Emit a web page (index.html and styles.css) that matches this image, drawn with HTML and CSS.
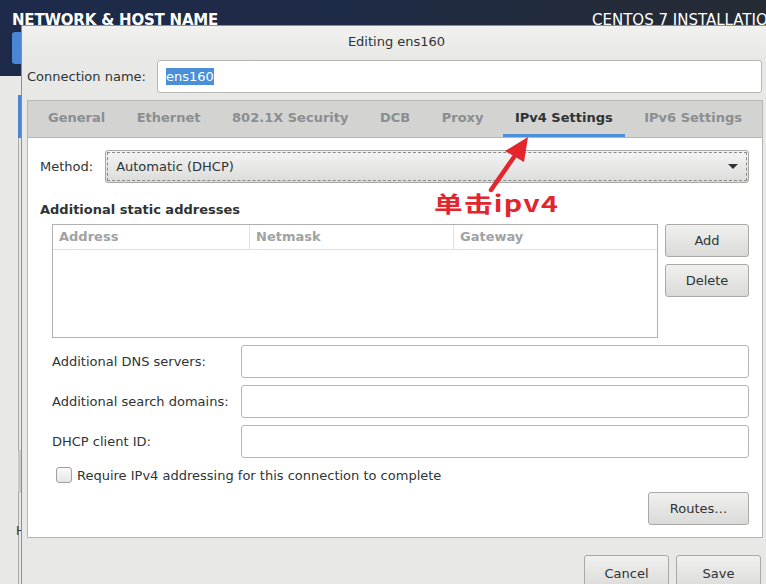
FILE: index.html
```html
<!DOCTYPE html>
<html lang="en">
<head>
  <meta charset="UTF-8">
  <title>Editing ens160</title>
  <link rel="stylesheet" href="styles.css">
</head>
<body>
  <!-- installer screen behind the dialog -->
  <header class="topbar">
    <h1>NETWORK &amp; HOST NAME</h1>
    <span class="product">CENTOS 7 INSTALLATION</span>
  </header>
  <div class="back-btn"></div>
  <div class="back-list">
    <div class="back-sel"></div>
    <div class="back-thumb"></div>
    <div class="back-h">H</div>
  </div>

  <!-- edit connection dialog -->
  <div class="dialog">
    <div class="dialog-title">Editing ens160</div>

    <div class="conn-row">
      <label>Connection name:</label>
      <div class="entry"><span class="selected">ens160</span></div>
    </div>

    <div class="notebook">
      <div class="tabs">
        <div class="tab">General</div>
        <div class="tab">Ethernet</div>
        <div class="tab">802.1X Security</div>
        <div class="tab">DCB</div>
        <div class="tab">Proxy</div>
        <div class="tab active">IPv4 Settings</div>
        <div class="tab">IPv6 Settings</div>
      </div>

      <div class="page">
        <div class="method-row">
          <label>Method:</label>
          <div class="combo">
            <span>Automatic (DHCP)</span>
            <span class="arrow"></span>
          </div>
        </div>

        <div class="section-title">Additional static addresses</div>

        <div class="addresses">
          <div class="table">
            <div class="thead">
              <div class="th">Address</div>
              <div class="th">Netmask</div>
              <div class="th">Gateway</div>
            </div>
          </div>
          <div class="side-buttons">
            <button class="btn">Add</button>
            <button class="btn">Delete</button>
          </div>
        </div>

        <div class="fields">
          <label>Additional DNS servers:</label>
          <div class="entry"></div>
          <label>Additional search domains:</label>
          <div class="entry"></div>
          <label>DHCP client ID:</label>
          <div class="entry"></div>
        </div>

        <div class="check-row">
          <span class="checkbox"></span>
          <span>Require IPv4 addressing for this connection to complete</span>
        </div>

        <div class="routes-row">
          <button class="btn routes">Routes…</button>
        </div>
      </div>
    </div>

    <div class="dialog-actions">
      <button class="btn action">Cancel</button>
      <button class="btn action">Save</button>
    </div>
  </div>

  <!-- red annotation -->
  <svg class="note-arrow" width="80" height="70" viewBox="0 0 80 70">
    <line x1="11" y1="55" x2="34" y2="22" stroke="#e3262d" stroke-width="4.5" stroke-linecap="round"/>
    <polygon points="48,2 25,16 44,27" fill="#e3262d"/>
  </svg>
  <div class="note-text">单击ipv4</div>
</body>
</html>
```

FILE: styles.css
```css
/* base */
body {
  margin: 0;
  width: 766px;
  height: 584px;
  overflow: hidden;
  position: relative;
  background: #e8e8e7;
  font-family: "DejaVu Sans", sans-serif;
  font-size: 13px;
  color: #2e3436;
}

/* installer background */
.topbar {
  height: 76px;
  background: linear-gradient(90deg, #1d2a4a 0%, #1f2b45 50%, #262b33 100%);
  display: flex;
  justify-content: space-between;
  align-items: flex-start;
  padding: 0 0 0 12px;
  color: #fff;
}

.topbar h1 {
  margin: 11px 0 0;
  font-size: 15px;
  font-weight: 600;
  letter-spacing: -0.2px;
}

.product {
  margin: 11px 0 0;
  font-size: 15px;
  white-space: nowrap;
  width: 174px;
  overflow: hidden;
}

.back-btn {
  position: absolute;
  left: 12px;
  top: 32px;
  width: 20px;
  height: 32px;
  background: #4a86d4;
  border-radius: 3px;
}

.back-list {
  position: absolute;
  left: 18px;
  top: 95px;
  width: 1px;
  height: 489px;
  background: #a8a8a8;
}

.back-sel {
  position: absolute;
  left: 0;
  top: 0;
  width: 4px;
  height: 43px;
  background: #4a86d4;
}

.back-thumb {
  position: absolute;
  left: 0;
  top: 355px;
  width: 4px;
  height: 43px;
  background: #c8c8c8;
  border-radius: 2px;
}

.back-h {
  position: absolute;
  left: -2px;
  top: 429px;
  font-size: 12px;
  color: #2e3436;
}

/* dialog */
.dialog {
  position: absolute;
  left: 21px;
  top: 25px;
  width: 749px;
  height: 580px;
  background: #e8e8e7;
  border: 1px solid #8f8f8f;
  border-right: none;
  border-bottom: none;
}

.dialog-title {
  height: 31px;
  line-height: 31px;
  text-align: center;
  background: linear-gradient(#f1f1f0, #e8e8e7);
  color: #2e3436;
}

.conn-row {
  display: flex;
  align-items: center;
  padding: 3px 9px 0 5px;
  gap: 10px;
}

.conn-row label {
  width: 120px;
  white-space: nowrap;
}

.entry {
  flex: 1;
  height: 31px;
  background: #fff;
  border: 1px solid #b6b6b3;
  border-radius: 3px;
  display: flex;
  align-items: center;
  padding-left: 8px;
}

.selected {
  background: #4a90d9;
  color: #fff;
  line-height: 17px;
}

/* notebook */
.notebook {
  margin: 7px 8px 0 5px;
  border: 1px solid #b6b6b3;
  height: 436px;
  background: #fff;
  display: flex;
  flex-direction: column;
}

.tabs {
  height: 36px;
  background: #d3d3d2;
  border-bottom: 1px solid #b6b6b3;
  display: flex;
  padding-left: 8px;
  gap: 7.5px;
}

.tab {
  padding: 0 12px;
  line-height: 34px;
  font-weight: bold;
  color: #8b8e8f;
  white-space: nowrap;
  border-bottom: 3px solid transparent;
}

.tab.active {
  color: #2e3436;
  border-bottom-color: #4a90d9;
}

.page {
  flex: 1;
  padding: 12px 13px 0 12px;
}

.method-row {
  display: flex;
  align-items: center;
  gap: 12px;
}

.combo {
  flex: 1;
  height: 31px;
  border: 1px solid #a7a7a5;
  border-radius: 3px;
  background: linear-gradient(#f4f4f4, #dcdcdb);
  display: flex;
  align-items: center;
  justify-content: space-between;
  padding: 0 10px 0 10px;
  outline: 1px dashed #8a8a8a;
  outline-offset: -3px;
}

.arrow {
  width: 0;
  height: 0;
  border-left: 5px solid transparent;
  border-right: 5px solid transparent;
  border-top: 5px solid #2e3436;
}

.section-title {
  font-weight: bold;
  margin: 19px 0 7px;
}

/* addresses table */
.addresses {
  display: flex;
  gap: 7px;
  padding-left: 12px;
}

.table {
  flex: 1;
  height: 112px;
  border: 1px solid #b0b0ae;
}

.thead {
  display: grid;
  grid-template-columns: 197px 204px 1fr;
  height: 24px;
  border-bottom: 1px solid #e1e1e0;
}

.th {
  font-weight: bold;
  color: #a0a2a3;
  line-height: 23px;
  padding-left: 6px;
  border-right: 1px solid #e1e1e0;
}

.th:last-child {
  border-right: none;
}

.side-buttons {
  width: 84px;
  display: flex;
  flex-direction: column;
  gap: 7px;
}

.btn {
  font-family: inherit;
  font-size: 13px;
  color: #2e3436;
  height: 33px;
  border: 1px solid #a9a9a7;
  border-radius: 3px;
  background: linear-gradient(#f0f0ef, #dadad9);
  padding: 0;
}

/* entries */
.fields {
  display: grid;
  grid-template-columns: 189px 1fr;
  row-gap: 7px;
  align-items: center;
  margin: 7px 0 0 12px;
}

.fields .entry {
  height: 31px;
}

.check-row {
  display: flex;
  align-items: center;
  gap: 5px;
  margin: 9px 0 0 16px;
}

.checkbox {
  width: 14px;
  height: 14px;
  border: 1px solid #a0a0a0;
  border-radius: 3px;
  background: linear-gradient(#fafafa, #e6e6e6);
}

.routes-row {
  display: flex;
  justify-content: flex-end;
  margin-top: 9px;
}

.routes {
  width: 101px;
}

/* dialog buttons */
.dialog-actions {
  display: flex;
  justify-content: flex-end;
  gap: 7px;
  padding: 17px 10px 0 0;
}

.action {
  width: 85px;
  height: 36px;
}

/* annotation */
.note-arrow {
  position: absolute;
  left: 480px;
  top: 135px;
}

.note-text {
  position: absolute;
  left: 434px;
  top: 186px;
  font-family: "Noto Sans CJK SC", sans-serif;
  font-weight: bold;
  font-size: 22px;
  letter-spacing: 1px;
  color: #e3262d;
  transform: scaleX(1.3);
  transform-origin: left center;
}
```
